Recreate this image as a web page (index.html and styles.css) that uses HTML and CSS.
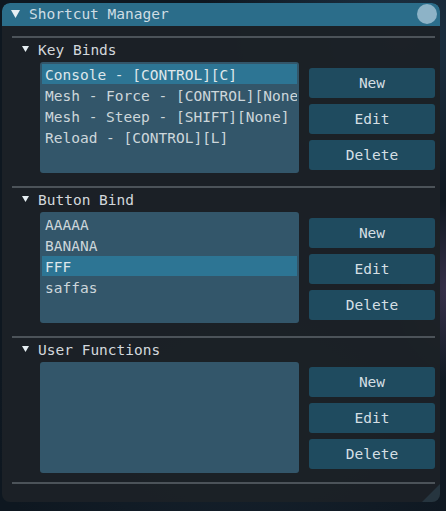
FILE: index.html
```html
<!DOCTYPE html>
<html>
<head>
<meta charset="utf-8">
<link rel="stylesheet" href="styles.css">
</head>
<body>
<div class="window">
  <div class="titlebar">
    <svg class="tri-title" width="9" height="8" viewBox="0 0 9 8"><polygon points="0,0 9,0 4.5,8" fill="#e6eef2"/></svg>
    <span class="title">Shortcut Manager</span>
    <span class="close"></span>
  </div>
  <div class="body">
    <section class="section">
      <div class="sep"></div>
      <div class="header">
        <svg class="tri" width="7" height="6" viewBox="0 0 7 6"><polygon points="0,0 7,0 3.5,6" fill="#e6eef2"/></svg>
        <span>Key Binds</span>
      </div>
      <div class="content">
        <div class="listbox">
          <div class="item selected">Console - [CONTROL][C]</div>
          <div class="item">Mesh - Force - [CONTROL][None]</div>
          <div class="item">Mesh - Steep - [SHIFT][None]</div>
          <div class="item">Reload - [CONTROL][L]</div>
        </div>
        <div class="buttons">
          <div class="btn">New</div>
          <div class="btn">Edit</div>
          <div class="btn">Delete</div>
        </div>
      </div>
    </section>
    <section class="section">
      <div class="sep"></div>
      <div class="header">
        <svg class="tri" width="7" height="6" viewBox="0 0 7 6"><polygon points="0,0 7,0 3.5,6" fill="#e6eef2"/></svg>
        <span>Button Bind</span>
      </div>
      <div class="content">
        <div class="listbox">
          <div class="item">AAAAA</div>
          <div class="item">BANANA</div>
          <div class="item selected">FFF</div>
          <div class="item">saffas</div>
        </div>
        <div class="buttons">
          <div class="btn">New</div>
          <div class="btn">Edit</div>
          <div class="btn">Delete</div>
        </div>
      </div>
    </section>
    <section class="section last">
      <div class="sep"></div>
      <div class="header">
        <svg class="tri" width="7" height="6" viewBox="0 0 7 6"><polygon points="0,0 7,0 3.5,6" fill="#e6eef2"/></svg>
        <span>User Functions</span>
      </div>
      <div class="content">
        <div class="listbox"></div>
        <div class="buttons b3">
          <div class="btn">New</div>
          <div class="btn">Edit</div>
          <div class="btn">Delete</div>
        </div>
      </div>
      <div class="sep"></div>
    </section>
  </div>
  <div class="grip"></div>
</div>
</body>
</html>
```

FILE: styles.css
```css
html, body {
  margin: 0;
  padding: 0;
}
body {
  width: 446px;
  height: 511px;
  overflow: hidden;
  background:
    radial-gradient(ellipse 60px 90px at 450px 290px, rgba(90,70,110,0.55), rgba(0,0,0,0) 100%),
    radial-gradient(ellipse 200px 160px at 400px 40px, rgba(40,70,95,0.6), rgba(0,0,0,0) 100%),
    radial-gradient(ellipse 260px 200px at 250px 420px, rgba(30,45,60,0.5), rgba(0,0,0,0) 100%),
    #0e1720;
  font-family: "DejaVu Sans Mono", "Liberation Mono", monospace;
  font-size: 14.5px;
  color: #d7dde1;
  padding-top: 3px;
  padding-left: 2px;
  box-sizing: border-box;
}
.window {
  position: relative;
  width: 438px;
  height: 499px;
  background: rgba(28, 33, 38, 0.97);
  border-radius: 8px;
  overflow: hidden;
}
.titlebar {
  height: 23px;
  background: #2b6d8a;
  display: flex;
  align-items: center;
  padding-left: 9px;
  border-radius: 8px 8px 0 0;
}
.tri-title {
  margin-right: 9px;
  margin-top: -1px;
}
.title {
  color: #cfdde4;
  flex: 1;
  line-height: 23px;
}
.close {
  width: 20px;
  height: 20px;
  border-radius: 50%;
  background: #8db3c7;
  margin-right: 3px;
  margin-top: -2px;
}
.body {
  padding: 10px 5px 0 10px;
}
.sep {
  height: 2px;
  background: #4c5359;
}
.header {
  height: 24px;
  display: flex;
  align-items: center;
  padding-left: 10px;
  color: #d3d8dc;
}
.tri {
  margin-right: 9px;
  margin-top: -2px;
}
.content {
  display: flex;
  gap: 10px;
  padding-left: 28px;
  margin-bottom: 13px;
}
.last .content {
  margin-bottom: 9px;
}
.listbox {
  width: 259px;
  height: 111px;
  box-sizing: border-box;
  background: #33566a;
  border-radius: 3px;
  padding: 2px 2px;
  display: flex;
  flex-direction: column;
  gap: 1px;
  overflow: hidden;
}
.item {
  height: 20px;
  line-height: 22px;
  padding-left: 3px;
  white-space: nowrap;
  overflow: hidden;
  color: #cdd6db;
}
.item.selected {
  background: #2d7594;
  color: #dfe7eb;
}
.buttons {
  width: 126px;
  display: flex;
  flex-direction: column;
  gap: 6px;
  margin-top: 6px;
}
.b3 {
  margin-top: 5px;
}
.btn {
  height: 30px;
  line-height: 31px;
  text-align: center;
  background: #1f4b5f;
  border-radius: 3px;
  color: #d5dfe4;
}
.grip {
  position: absolute;
  right: 0;
  bottom: 0;
  width: 0;
  height: 0;
  border-left: 18px solid transparent;
  border-bottom: 18px solid #26353f;
}
```
